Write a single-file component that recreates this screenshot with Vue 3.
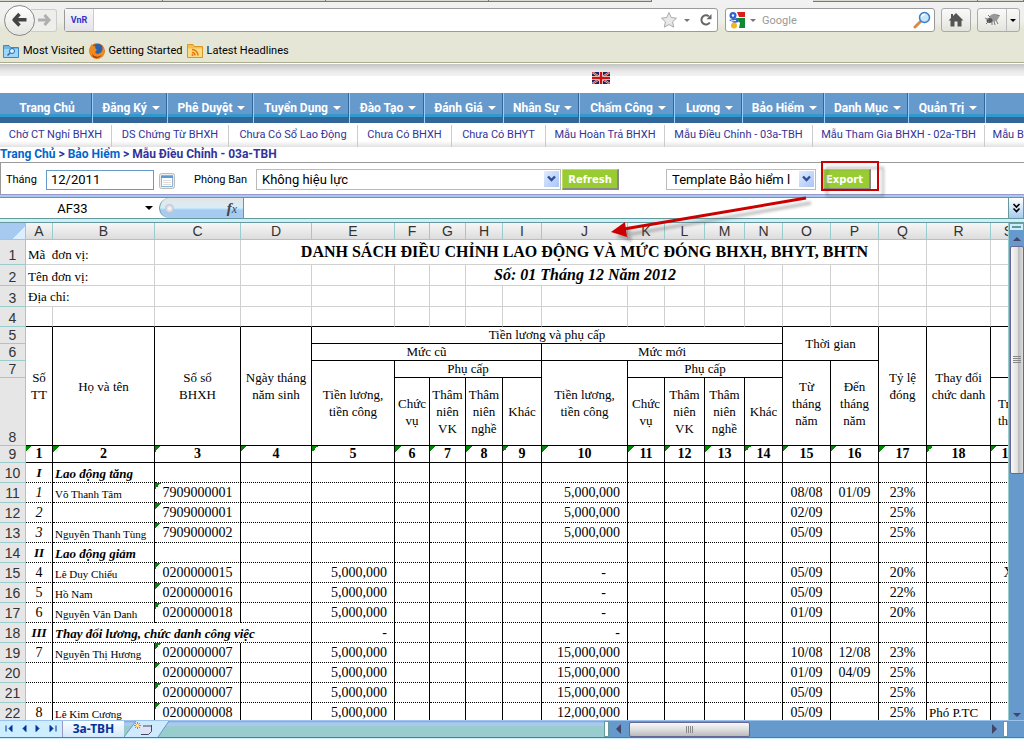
<script setup>
const menu = [
  ['Trang Chủ', false], ['Đăng Ký', true], ['Phê Duyệt', true], ['Tuyển Dụng', true],
  ['Đào Tạo', true], ['Đánh Giá', true], ['Nhân Sự', true], ['Chấm Công', true],
  ['Lương', true], ['Bảo Hiểm', true], ['Danh Mục', true], ['Quản Trị', true],
]
const submenu = [
  'Chờ CT Nghỉ BHXH', 'DS Chứng Từ BHXH', 'Chưa Có Sổ Lao Động', 'Chưa Có BHXH', 'Chưa Có BHYT',
  'Mẫu Hoàn Trả BHXH', 'Mẫu Điều Chỉnh - 03a-TBH', 'Mẫu Tham Gia BHXH - 02a-TBH', 'Mẫu BHXH',
]
const columns = 'ABCDEFGHIJKLMNOPQRS'.split('')
const widths = [27, 102, 86, 71, 83, 35, 36, 37, 39, 86, 37, 40, 40, 38, 48, 48, 48, 64, 36]
const rest = columns.slice(2)

const records = [
  { n: 10, A: 'I', B: 'Lao động tăng', group: true },
  { n: 11, A: '1', em: true, B: 'Võ Thanh Tâm', C: '7909000001', J: '5,000,000', O: '08/08', P: '01/09', Q: '23%' },
  { n: 12, A: '2', em: true, C: '7909000001', J: '5,000,000', O: '02/09', Q: '25%' },
  { n: 13, A: '3', em: true, B: 'Nguyễn Thanh Tùng', C: '7909000002', J: '5,000,000', O: '05/09', Q: '25%' },
  { n: 14, A: 'II', B: 'Lao động giảm', group: true },
  { n: 15, A: '4', B: 'Lê Duy Chiểu', C: '0200000015', E: '5,000,000', J: '-', inset: true, O: '05/09', Q: '20%', S: 'X' },
  { n: 16, A: '5', B: 'Hồ Nam', C: '0200000016', E: '5,000,000', J: '-', inset: true, O: '05/09', Q: '22%' },
  { n: 17, A: '6', B: 'Nguyễn Văn Danh', C: '0200000018', E: '5,000,000', J: '-', inset: true, O: '01/09', Q: '20%' },
  { n: 18, A: 'III', B: 'Thay đổi lương, chức danh công việc', group: true, span: 3, E: '-', J: '-' },
  { n: 19, A: '7', B: 'Nguyễn Thị Hương', C: '0200000007', E: '5,000,000', J: '15,000,000', O: '10/08', P: '12/08', Q: '23%' },
  { n: 20, C: '0200000007', E: '5,000,000', J: '15,000,000', O: '01/09', P: '04/09', Q: '25%' },
  { n: 21, C: '0200000007', E: '5,000,000', J: '15,000,000', O: '05/09', Q: '25%' },
  { n: 22, A: '8', B: 'Lê Kim Cương', C: '0200000008', E: '5,000,000', J: '12,000,000', O: '05/09', Q: '25%', R: 'Phó P.TC' },
]
const tail = (r) => (r.span ? columns.slice(4) : rest)
</script>

<template>
  <div class="page">
    <div class="tabstrip"><i></i><i></i><i></i><i></i><i class="active"></i><i></i><i></i></div>
    <header class="chrome">
      <div class="nav">
        <div class="history">
          <button class="back" aria-label="Back">
            <svg width="18" height="18" viewBox="0 0 18 18"><path d="M8.500 3L3 8.800L8.500 14.500M3.500 8.800H15.500" fill="none" stroke="#444" stroke-width="3.400" stroke-linejoin="round" /></svg>
          </button>
          <button class="forward" aria-label="Forward">
            <svg width="14" height="14" viewBox="0 0 14 14"><path d="M7.500 2L12 7L7.500 12M1 7H11.500" fill="none" stroke="#b0b0b0" stroke-width="3" /></svg>
          </button>
        </div>
        <div class="url">
          <span class="identity">VnR</span>
          <input class="address" aria-label="Address" />
          <svg class="star" width="18" height="18" viewBox="0 0 18 18"><path d="M9 1.500L11.200 6.500L16.500 7.200L12.600 10.800L13.700 16.200L9 13.500L4.300 16.200L5.400 10.800L1.500 7.200L6.800 6.500Z" fill="#e8e8e8" stroke="#aaa" /></svg>
          <i class="caret"></i>
          <svg class="reload" width="14" height="14" viewBox="0 0 14 14"><path d="M10.800 9.500A4.600 4.600 0 1 1 9.800 3.200" fill="none" stroke="#666" stroke-width="2" /><path d="M7.500 6.200H12.500V1Z" fill="#666" /></svg>
        </div>
        <div class="search">
          <svg width="18" height="18" viewBox="0 0 18 18"><path d="M9 1H17V6H11Z" fill="#d9201a" /><path d="M8 7H17V17H11L12 12Z" fill="#0e8a34" /><circle cx="5" cy="4.500" r="3.500" fill="#2f62d0" /><path d="M1 9L9 7L11 11L6 12Z" fill="#2f62d0" /><circle cx="6" cy="14.500" r="3" fill="#f5b71d" /><circle cx="5" cy="4.500" r="1.200" fill="#fff" /><path d="M3 10L8 9.500" stroke="#fff" /></svg>
          <i class="caret"></i>
          <input placeholder="Google" aria-label="Search" />
          <svg width="18" height="18" viewBox="0 0 18 18"><path d="M2 16L7.500 10.500" stroke="#d98a4a" stroke-width="3" stroke-linecap="round" /><circle cx="11.500" cy="6.500" r="5" fill="#c5e6fb" stroke="#3a7cc8" stroke-width="1.500" /><path d="M8.500 6A3 3 0 0 1 12 3.500" stroke="#fff" stroke-width="1.500" fill="none" /></svg>
        </div>
        <button class="tool home" aria-label="Home">
          <svg width="16" height="16" viewBox="0 0 16 16"><path d="M8 1L15.500 8.500H13.500V14.500H9.500V9.500H6.500V14.500H2.500V8.500H0.500L3 6V2H5V4Z" fill="#555" /></svg>
        </button>
        <button class="tool bug" aria-label="Add-on">
          <svg width="18" height="16" viewBox="0 0 18 16"><ellipse cx="10" cy="5.500" rx="5" ry="3.600" fill="#999" transform="rotate(-15 10 5.500)" /><ellipse cx="5.500" cy="8.500" rx="3" ry="2.500" fill="#555" /><path d="M1 6L5 8M2 12L5 9M8 9L8 13M12 8L14 12M6 5L4 3M13 3L16 4M10 9L11 13" stroke="#777" fill="none" /></svg>
          <span class="drop"><i class="caret dark"></i></span>
        </button>
      </div>
      <nav class="bookmarks">
        <a href="#">
          <svg width="16" height="16" viewBox="0 0 16 16"><path d="M0.500 2.500H6L7.500 4.500H15.500V14.500H0.500Z" fill="#6db8ea" stroke="#3f87bf" /><path d="M1 6H15V14H1Z" fill="#9fd6f7" /><circle cx="9" cy="8" r="2.500" fill="#d9f0fd" stroke="#2668a8" /><path d="M7 10L4.500 12.500" stroke="#2668a8" stroke-width="1.500" /></svg>
          Most Visited</a>
        <a href="#">
          <svg width="16" height="16" viewBox="0 0 16 16"><circle cx="8" cy="8" r="7.800" fill="#d9600f" /><circle cx="9" cy="6" r="5" fill="#2a62b0" /><path d="M0.500 5Q2 3 2.500 1Q4 3.500 6.500 3.500Q5.500 5.500 8 7Q6 8 6.500 10Q9 12 12 9.500Q14.500 7 13 2.500Q17 7 14.800 12Q11 16.500 6 15.500Q0 13.500 0.500 5Z" fill="#ef8a1c" /><path d="M3 11Q7 16 13 12Q9 17 4 14Z" fill="#b03a08" /></svg>
          Getting Started</a>
        <a href="#">
          <svg width="16" height="16" viewBox="0 0 16 16"><path d="M0.500 1.500H6L7.500 3.500H15.500V14.500H0.500Z" fill="#f5c04a" stroke="#d9972a" /><path d="M1 5.500H15V14H1Z" fill="#fbdc84" /><path d="M5 6.500A6 6 0 0 1 11 12.500M5 9.500A3 3 0 0 1 8 12.500" stroke="#e8760f" stroke-width="1.500" fill="none" /><circle cx="5.500" cy="12" r="1" fill="#e8760f" /></svg>
          Latest Headlines</a>
      </nav>
    </header>

    <div class="banner">
      <svg width="18" height="12" viewBox="0 0 18 12"><rect width="18" height="12" fill="#1c2458" /><path d="M0 0L18 12M18 0L0 12" stroke="#e8dada" stroke-width="2" /><path d="M0 0L18 12M18 0L0 12" stroke="#c22" stroke-width="1" /><path d="M9 0V12M0 6H18" stroke="#eee" stroke-width="4" /><path d="M9 0V12M0 6H18" stroke="#c11" stroke-width="2.400" /></svg>
    </div>

    <nav class="menu">
      <a v-for="[label, more] in menu" :key="label" href="#"><span>{{ label }}</span><i v-if="more"></i></a>
    </nav>
    <nav class="submenu">
      <a v-for="label in submenu" :key="label" href="#">{{ label }}</a>
    </nav>
    <div class="crumbs"><a href="#">Trang Chủ</a> &gt; <a href="#">Bảo Hiểm</a> &gt; Mẫu Điều Chỉnh - 03a-TBH</div>

    <form class="filters" @submit.prevent>
      <label for="month">Tháng</label>
      <input id="month" class="month" value="12/2011" />
      <button type="button" class="calendar" aria-label="Calendar">
        <svg width="16" height="16" viewBox="0 0 16 16"><rect x="0.500" y="0.500" width="15" height="15" rx="2" fill="#eee" stroke="#bbb" /><rect x="2.500" y="2.500" width="11" height="11" fill="#fff" stroke="#8fb3d9" /><path d="M2 4H14" stroke="#5b9bd5" stroke-width="2" /><path d="M4 7.500H12M4 9.500H12M4 11.500H12" stroke="#ddd" /></svg>
      </button>
      <label for="dept" class="dept-label">Phòng Ban</label>
      <div class="combo dept">
        <select id="dept"><option>Không hiệu lực</option></select>
        <span class="chev"><svg width="9" height="8" viewBox="0 0 9 8"><path d="M1 1.500L4.500 5L8 1.500" fill="none" stroke="#2a4f9a" stroke-width="2.400" /></svg></span>
      </div>
      <button type="button" class="green">Refresh</button>
      <div class="combo template">
        <select aria-label="Template"><option>Template Bảo hiểm l</option></select>
        <span class="chev"><svg width="9" height="8" viewBox="0 0 9 8"><path d="M1 1.500L4.500 5L8 1.500" fill="none" stroke="#2a4f9a" stroke-width="2.400" /></svg></span>
      </div>
      <button type="button" class="green export">Export</button>
    </form>

    <div class="formula">
      <div class="namebox"><input value="AF33" aria-label="Name box" /><i class="caret dark"></i></div>
      <div class="fx"><span class="knob"></span><i><b>f</b>x</i></div>
      <input class="formula-input" aria-label="Formula" />
      <button class="expand" aria-label="Expand formula bar">
        <svg width="9" height="10" viewBox="0 0 9 10"><path d="M1.500 1L4.500 4L7.500 1M1.500 5.500L4.500 8.500L7.500 5.500" fill="none" stroke="#000" stroke-width="1.600" /></svg>
      </button>
    </div>

    <div class="workspace">
      <div class="sheet">
        <table>
          <colgroup><col class="numcol" /><col v-for="(w, i) in widths" :key="i" :style="{ width: w + 'px' }" /></colgroup>
          <thead>
            <tr class="letters"><th class="corner"></th><th v-for="c in columns" :key="c">{{ c }}</th></tr>
          </thead>
          <tbody class="intro">
            <tr class="r1"><th>1</th><td colspan="2">Mã&nbsp; đơn vị:</td><td></td><td colspan="13" class="title">DANH SÁCH ĐIỀU CHỈNH LAO ĐỘNG VÀ MỨC ĐÓNG BHXH, BHYT, BHTN</td><td></td><td></td><td></td></tr>
            <tr class="r2"><th>2</th><td colspan="2">Tên đơn vị:</td><td></td><td></td><td></td><td></td><td></td><td colspan="5" class="subtitle">Số: 01 Tháng 12 Năm 2012</td><td v-for="i in 7" :key="i"></td></tr>
            <tr class="r2"><th>3</th><td colspan="2" class="place">Địa chỉ:</td><td v-for="i in 17" :key="i"></td></tr>
            <tr class="r4"><th>4</th><td v-for="i in 19" :key="i"></td></tr>
          </tbody>
          <tbody class="heads">
            <tr><th>5</th>
              <td rowspan="4">Số TT</td><td rowspan="4">Họ và tên</td><td rowspan="4">Số sổ<br />BHXH</td><td rowspan="4">Ngày tháng năm sinh</td>
              <td colspan="10">Tiền lương và phụ cấp</td><td colspan="2" rowspan="2">Thời gian</td>
              <td rowspan="4">Tỷ lệ đóng</td><td rowspan="4">Thay đổi chức danh</td><td rowspan="3"></td></tr>
            <tr><th>6</th><td colspan="5">Mức cũ</td><td colspan="5">Mức mới</td></tr>
            <tr><th>7</th>
              <td rowspan="2">Tiền lương,<br />tiền công</td><td colspan="4">Phụ cấp</td>
              <td rowspan="2">Tiền lương,<br />tiền công</td><td colspan="4">Phụ cấp</td>
              <td rowspan="2">Từ<br />tháng<br />năm</td><td rowspan="2">Đến<br />tháng<br />năm</td></tr>
            <tr class="r8"><th>8</th>
              <template v-for="k in 2" :key="k"><td>Chức<br />vụ</td><td>Thâm<br />niên<br />VK</td><td>Thâm<br />niên<br />nghề</td><td>Khác</td></template>
              <td class="cut">Trong<br />tháng</td></tr>
            <tr class="index"><th>9</th><td v-for="i in 19" :key="i" class="flag">{{ i }}</td></tr>
          </tbody>
          <tbody class="data">
            <tr v-for="r in records" :key="r.n" :class="{ group: r.group }">
              <th>{{ r.n }}</th>
              <td class="cA" :class="{ em: r.em }">{{ r.A }}</td>
              <td class="cB" :colspan="r.span || 1">{{ r.B }}</td>
              <td v-for="c in tail(r)" :key="c" :class="['c' + c, { flag: c === 'C' && r.C, inset: c === 'J' && r.inset }]">{{ r[c] }}</td>
            </tr>
          </tbody>
        </table>
      </div>
      <div class="vscroll"><span class="split"></span><i class="up"></i><span class="thumb"><svg width="8" height="8" viewBox="0 0 8 8"><path d="M0 0.500H8M0 2.500H8M0 4.500H8M0 6.500H8" stroke="#888" /></svg></span><i class="down"></i></div>
    </div>

    <footer class="tabs">
      <div class="arrows">
        <svg width="62" height="16" viewBox="0 0 62 16"><path d="M6 4.500V10.500M12 4.500L9 7.500L12 10.500ZM26 4.500L23 7.500L26 10.500ZM36 4.500L39 7.500L36 10.500ZM50 4.500L53 7.500L50 10.500ZM56 4.500V10.500" fill="#003399" stroke="#003399" /></svg>
      </div>
      <a href="#" class="tab">3a-TBH</a>
      <svg class="newtab" width="46" height="16" viewBox="0 0 46 16"><path d="M0 16L12 0H45L34 16Z" fill="#cfeafc" /><path d="M0 16L12 0M34 16L45 0" stroke="#6699cc" fill="none" /><path d="M15 5H27V11L25 13H17Q15 13 15 11Z" fill="#dfe4f4" /><path d="M17 13.500H24.500L27.500 10.500V4M19 5H27" stroke="#446" fill="none" /><path d="M13.500 1V8M10 4.500H17M11 2L16 7M16 2L11 7" stroke="#d98020" /><circle cx="13.500" cy="4.500" r="1.500" fill="#fff2b0" /></svg>
      <div class="filler"></div>
      <span class="grip"></span>
      <div class="hscroll">
        <i class="left"></i>
        <span class="hthumb"><svg width="8" height="7" viewBox="0 0 8 7"><path d="M0.500 0V7M2.500 0V7M4.500 0V7M6.500 0V7" stroke="#888" /></svg></span>
        <i class="right"></i>
      </div>
      <span class="grip"></span><span class="end"></span>
    </footer>

    <svg class="callout" width="284" height="86" viewBox="0 0 284 86">
      <defs><filter id="soft" x="-10%" y="-10%" width="120%" height="130%"><feGaussianBlur stdDeviation="1.500" /></filter></defs>
      <g filter="url(#soft)" opacity="0.400" transform="translate(5 5)"><rect x="216" y="3" width="56" height="28" fill="none" stroke="#555" stroke-width="2" /><path d="M200 38L20 69" stroke="#555" stroke-width="3" /><path d="M5 72L19 62L21 77Z" fill="#555" /></g>
      <rect x="216" y="2" width="56" height="28" fill="none" stroke="#c00" stroke-width="2" />
      <path d="M200 38L18 69" stroke="#c00" stroke-width="3" /><path d="M5 72L19 62L21 77Z" fill="#c00" />
    </svg>
  </div>
</template>

<style>
body { margin: 0; background: #fff; }
</style>

<style scoped>
* { box-sizing: border-box; }
.page { position: relative; height: 100vh; min-height: 600px; padding-bottom: 12px; display: flex; flex-direction: column; overflow: hidden; font-family: Roboto, "Liberation Sans", sans-serif; font-size: 11px; color: #000; }
button, input, select { font: inherit; margin: 0; padding: 0; color: inherit; }
input { border: 0; background: transparent; outline: 0; min-width: 0; }
a { text-decoration: none; color: inherit; }
svg { display: block; flex: none; }

.tabstrip { display: grid; grid-template-columns: 163px 163px 163px 163px 161px 1fr 46px; height: 2px; flex: none; background: #d8d8d0; }
.tabstrip i { border-bottom: 1px solid #777; border-right: 1px solid #777; }
.tabstrip .active { border: 0; background: #f1f1f1; }
.chrome { flex: none; background: linear-gradient(#f1f1f1 0, #eeeeea 20px, #e6e6d6 26px, #e6e6d6 100%); border-bottom: 1px solid #a9ad8e; height: 61px; }
.nav { display: flex; align-items: center; height: 36px; padding: 0 4px; }
.history { display: flex; align-items: center; width: 60px; }
.back { width: 31px; height: 31px; border: 1px solid #888; border-radius: 50%; background: linear-gradient(#fff, #e4e4e0); display: grid; place-items: center; z-index: 1; }
.forward { width: 26px; height: 23px; margin-left: -4px; border: 1px solid #ccc; border-left: 0; border-radius: 0 3px 3px 0; background: #eeeeea; display: grid; place-items: center; }
.url, .search { display: flex; align-items: center; height: 24px; border: 1px solid #999; border-radius: 3px; background: #fff; }
.url { flex: 1; }
.identity { align-self: stretch; width: 29px; display: grid; place-items: center; background: linear-gradient(#f7f7f7, #e4e4e8); border-right: 1px solid #ccc; color: #33c; font-size: 9px; font-weight: bold; }
.address { flex: 1; }
.caret { width: 0; height: 0; border: 3px solid transparent; border-top-color: #777; border-bottom: 0; }
.caret.dark { border-top-color: #000; }
.star { margin-right: 6px; }
.reload { margin: 0 4px 0 9px; }
.search { width: 210px; margin-left: 7px; padding: 0 3px 0 2px; }
.search .caret { margin: 0 6px 0 4px; }
.search input { flex: 1; }
.search input::placeholder { color: #999; opacity: 1; }
.tool { height: 24px; border: 1px solid #aaa; border-radius: 3px; background: linear-gradient(#fafafa, #e4e4de); display: flex; align-items: center; justify-content: center; }
.home { width: 30px; margin-left: 6px; }
.bug { width: 43px; margin-left: 6px; justify-content: space-between; padding-left: 6px; }
.drop { align-self: stretch; width: 13px; border-left: 1px solid #bbb; display: grid; place-items: center; }
.bookmarks { display: flex; gap: 4px; padding: 5px 3px; }
.bookmarks a { display: flex; align-items: center; gap: 4px; line-height: 16px; }

.banner { flex: none; height: 30px; border-top: 1px solid #fff; background: linear-gradient(#c4c4c4 0, #e8e8e8 7px, #f2f2f2 12px, #fff 12px); padding: 8px 0 0 592px; }
.menu { flex: none; display: grid; grid-template-columns: 93px 75px 86px 96px 75px 79px 76px 95px 68px 82px 84px 77px; height: 30px; background: linear-gradient(#69c 0, #69c 21px, #39c 21px, #39c 24px, #369 24px); color: #fff; font-size: 12px; line-height: 28px; font-weight: bold; }
.menu a { display: flex; align-items: center; justify-content: center; gap: 5px; padding-left: 2px; border-right: 1px solid #9cf; box-shadow: inset -1px 0 #369; white-space: nowrap; }
.menu i { width: 0; border: 4px solid transparent; border-top-color: #fff; border-bottom: 0; }
.submenu { flex: none; display: grid; grid-template-columns: 112px 117px 129px 94px 94px 119px 148px 172px 70px; height: 24px; overflow: hidden; padding-top: 2px; background: linear-gradient(#fff 18px, #e2e2e2); color: #339; line-height: 20px; white-space: nowrap; }
.submenu a { text-align: center; border-right: 1px solid #ccc; }
.crumbs { flex: none; height: 15px; line-height: 15px; font-size: 12px; font-weight: bold; color: #339; white-space: pre; }
.crumbs a { color: #06c; }

.filters { flex: none; display: flex; align-items: center; height: 33px; padding: 2px 0 0 5px; border: solid #999; border-width: 1px 0 1px 1px; border-bottom-color: #99c; }
.filters label { width: 40px; white-space: nowrap; }
.month { width: 108px; height: 20px; border: 1px solid #69c; padding-left: 4px; font-size: 13px; }
.calendar { width: 16px; height: 16px; border: 0; background: none; margin: 2px 0 0 5px; }
.filters .dept-label { width: 62px; margin-left: 19px; }
.combo { position: relative; display: flex; height: 21px; border: 1px solid #bbb; }
.combo select { appearance: none; flex: 1; border: 0; background: transparent; padding: 0 0 0 5px; font-size: 13px; outline: 0; min-width: 0; }
.dept { width: 305px; }
.template { width: 150px; margin-left: 47px; }
.chev { position: absolute; right: 1px; top: 1px; width: 15px; height: 16px; background: linear-gradient(135deg, #e0ecff, #aac4f5); display: grid; place-items: center; pointer-events: none; }
.green { height: 21px; width: 57px; margin-left: 1px; background: #9c3; border: 1px solid #bd6; border-right: 2px solid #888; border-bottom: 2px solid #888; color: #fff; font-weight: bold; font-family: "DejaVu Sans", sans-serif; font-size: 10px; }
.export { width: 48px; margin-left: 7px; text-align: left; padding-left: 2px; }

.formula { flex: none; display: flex; height: 27px; border-top: 2px solid #a6caf0; border-bottom: 3px solid #cef; background: #fff; box-shadow: inset 0 1px #699, inset 0 -1px #699; }
.namebox { display: flex; align-items: center; width: 159px; padding-right: 6px; }
.namebox input { flex: 1; text-align: center; font-size: 13px; }
.namebox .caret { border-width: 4px 4px 0; }
.fx { display: flex; align-items: center; justify-content: space-between; width: 85px; margin: 1px 0; padding: 0 6px 0 5px; border: 1px solid #699; border-width: 0 1px 0 1px; border-radius: 11px 0 0 11px; background: linear-gradient(#e4e4e4, #dcecf4 40%, #cef 50%, #a6caf0 60%); font: italic 12px "Liberation Serif", serif; color: #444; }
.fx b { font-size: 15px; }
.knob { width: 9px; height: 9px; border-radius: 50%; background: radial-gradient(#fff, #aab); }
.formula-input { flex: 1; }
.expand { width: 16px; border: 1px solid #699; background: linear-gradient(#fff, #a6caf0); display: grid; place-items: center; }

.workspace { flex: 1; min-height: 0; display: flex; border-top: 1px solid #699; }
.sheet { flex: 1; min-width: 0; overflow: hidden; background: #fff; }
table { table-layout: fixed; width: 1027px; border-collapse: separate; border-spacing: 0; font: 13px/17px "Liberation Serif", serif; }
.numcol { width: 26px; }
th, td { padding: 0; border: 0 solid #d0d0d0; border-width: 0 1px 1px 0; white-space: nowrap; }
th { font: 14px/16px "Liberation Sans", sans-serif; color: #333; background: #e6e6e6; border-color: #9cc; vertical-align: bottom; }
.letters th { height: 17px; background: linear-gradient(#f6f6f6, #ddd); line-height: 16px; }
.letters .corner { background: linear-gradient(135deg, #a6caf0 0 70%, #dceeff 70%); }
.intro td { vertical-align: bottom; padding-left: 2px; }
.r1 { height: 25px; }
.r1 th, .intro .r1 td { padding-bottom: 1px; }
.r2 { height: 21px; }
.r4 { height: 20px; }
.intro .place { vertical-align: middle; }
.intro .r1 .title { font-size: 16px; line-height: 22px; font-weight: bold; text-align: center; padding: 0 0 0 50px; vertical-align: middle; }
.intro .subtitle { font: italic bold 16px/18px "Liberation Serif", serif; text-align: center; padding: 0; vertical-align: middle; }
.r4 td { border-bottom-color: #000; }
.heads tr { height: 17px; }
.heads .r8 { height: 68px; }
.heads th { line-height: 15px; }
.heads td { text-align: center; border-color: #000; line-height: 17px; white-space: normal; }
.heads tr:not(.r8):not(.index) td[colspan] { line-height: 16px; }
.heads .index td { font-weight: bold; font-size: 14px; line-height: 16px; }
.heads .cut { text-align: left; padding-left: 7px; }
.flag { background: linear-gradient(135deg, #080 50%, transparent 50%) 0 0 / 6px 6px no-repeat; }
.data tr { height: 20px; }
.data th { line-height: 18px; }
.data td { border-color: #000; border-bottom-style: dotted; text-align: center; font-size: 14px; line-height: 18px; vertical-align: bottom; }
.data .cB { text-align: left; padding-left: 2px; font-size: 11px; line-height: 16px; }
.data .em, .group .cA { font-style: italic; }
.group .cA, .data .group .cB { font-style: italic; font-weight: bold; font-size: 13px; }
.data .cE, .data .cJ { text-align: right; padding-right: 7px; }
.data .inset { padding-right: 21px; }
.data .cR { text-align: left; padding-left: 2px; font-size: 13px; }

.vscroll { width: 16px; display: flex; flex-direction: column; align-items: center; background: #69c; border-left: 1px solid #9cc; padding: 1px 0 3px; }
.split { width: 13px; height: 6px; border: 2px solid #cef; background: #699; }
.up, .down { border: 4px solid transparent; }
.up { border-bottom-color: #446; border-top: 0; margin: 7px 0 5px; }
.down { border-top-color: #446; border-bottom: 0; margin-top: auto; }
.thumb { width: 14px; height: 228px; border: 1px solid #669; border-radius: 2px; background: linear-gradient(90deg, #f8f8f8, #ddd 60%, #bbb 60%, #ddd); display: grid; place-items: center; }

.tabs { flex: none; display: flex; height: 18px; border-top: 1px solid #9ac4ee; border-bottom: 1px solid #66c; background: linear-gradient(#99c 0, #a6caf0 2px, #a6caf0 5px, #9cc 5px); box-shadow: 0 1px #cef; }
.arrows { width: 62px; background: #cef; }
.tab { width: 62px; background: linear-gradient(#f8fcff, #d4e8fa); border-left: 1px solid #99c; color: #039; font-family: "Noto Sans", sans-serif; font-weight: bold; font-size: 12px; line-height: 15px; text-align: center; }
.newtab { margin-right: -1px; }
.filler { flex: 1; }
.grip { width: 5px; border: 1px solid #699; background: #fff; }
.hscroll { flex: 0 0 394px; display: flex; align-items: center; background: #69c; padding: 0 6px 0 7px; }
.left, .right { border: 5px solid transparent; }
.left { border-right-color: #446; border-left: 0; }
.right { border-left-color: #446; border-right: 0; margin-left: auto; }
.hthumb { width: 121px; height: 15px; margin-left: 8px; border: 1px solid #669; border-radius: 2px; background: linear-gradient(#f8f8f8, #ddd 50%, #bbb); display: grid; place-items: center; }
.end { width: 16px; background: #69c; }

.callout { position: absolute; left: 606px; top: 160px; pointer-events: none; }
</style>
